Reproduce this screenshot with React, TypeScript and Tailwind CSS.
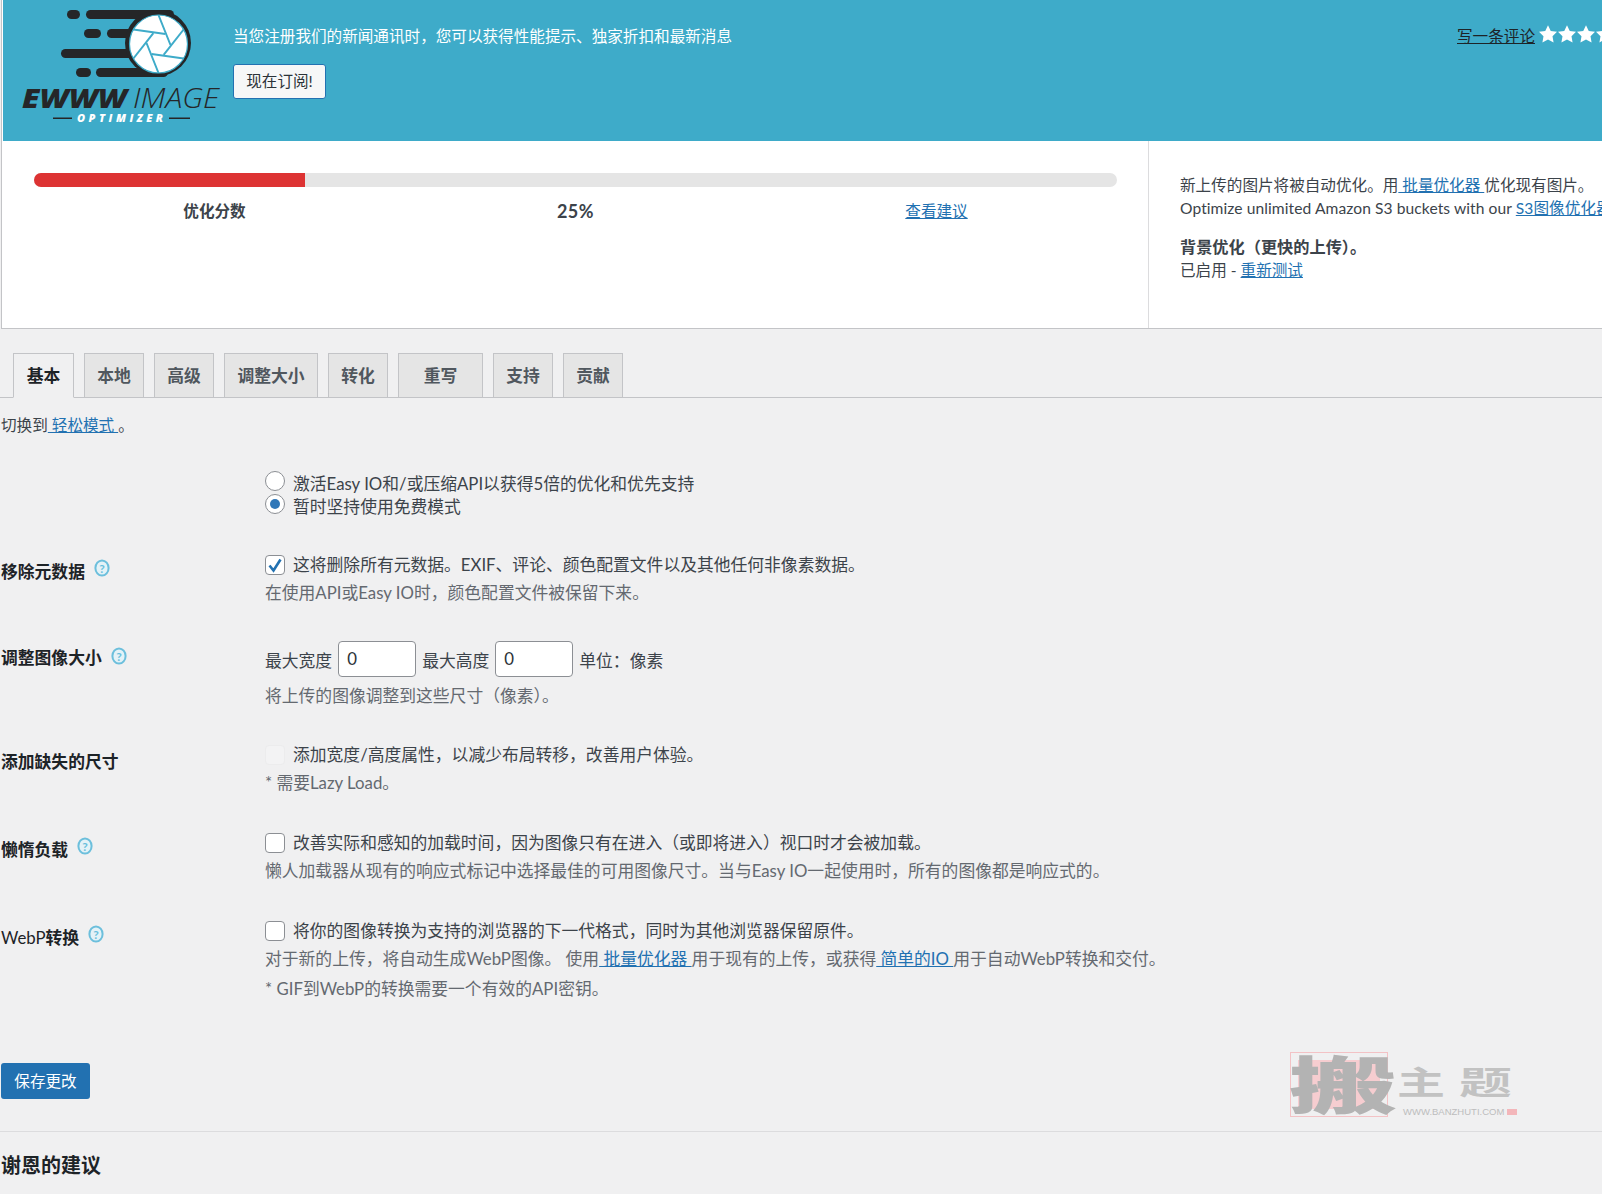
import React from "react";

const font = "[font-family:'Lato','Noto_Sans_CJK_SC',sans-serif]";

const tabs = [
  { label: "基本", width: "w-[61px]", active: true },
  { label: "本地", width: "w-[60px]" },
  { label: "高级", width: "w-[60px]" },
  { label: "调整大小", width: "w-[94px]" },
  { label: "转化", width: "w-[60px]" },
  { label: "重写", width: "w-[85px]" },
  { label: "支持", width: "w-[60px]" },
  { label: "贡献", width: "w-[60px]" },
];

const Help = ({ lift }: { lift: string }) => (
  <svg width="16" height="18" viewBox="0 0 16 18" className={`ml-[9px] shrink-0 ${lift}`}>
    <ellipse cx="8" cy="9" rx="6.6" ry="7.6" fill="#e4f2f7" stroke="#6cbfdc" strokeWidth="2" />
    <text x="8" y="13.500" textAnchor="middle" fontSize="12" fontWeight="700" fill="#6cbfdc" fontFamily="'Lato',sans-serif">
      ?
    </text>
  </svg>
);

const Checkbox = ({ checked, disabled }: { checked?: boolean; disabled?: boolean }) => (
  <span
    className={`w-[20px] h-[20px] rounded-[4px] border flex items-center justify-center shrink-0 ${
      disabled ? "bg-[#f3f3f4] border-[#ececed]" : "bg-white border-[#8c8f94]"
    }`}
  >
    {checked && (
      <svg width="16" height="16" viewBox="0 0 16 16">
        <path d="M2.5 8.5 L6.5 13.5 L13.5 2.5" fill="none" stroke="#2271b1" strokeWidth="2.6" />
      </svg>
    )}
  </span>
);

const Radio = ({ checked }: { checked?: boolean }) => (
  <span className="w-[20px] h-[20px] -translate-y-[3px] rounded-full border border-[#8c8f94] bg-white flex items-center justify-center shrink-0">
    {checked && <span className="w-[10px] h-[10px] rounded-full bg-[#2f77b8]" />}
  </span>
);

const Row = ({
  label,
  help,
  className,
  children,
}: {
  label?: React.ReactNode;
  help?: string;
  className: string;
  children: React.ReactNode;
}) => (
  <div className={`grid grid-cols-[265px_1fr] ${className}`}>
    <div className="flex items-center h-[29px] pt-[5px] pl-[1px] font-bold text-[#1d2327] leading-[24px]">
      {label}
      {help && <Help lift={help} />}
    </div>
    <div>{children}</div>
  </div>
);

const Desc = ({ children }: { children: React.ReactNode }) => (
  <p className="mt-[6px] leading-[24px] text-[#646970]">{children}</p>
);

const Link = ({ children }: { children: React.ReactNode }) => (
  <a className="text-[#2271b1] underline">{children}</a>
);

const NumberBox = () => (
  <span className="w-[78px] h-[36px] mx-[6px] pl-[8px] rounded-[4px] border border-[#8c8f94] bg-white flex items-center text-[#2c3338]">
    0
  </span>
);

const Logo = () => {
  const blades = [0, 60, 120, 180, 240, 300];
  return (
    <svg width="204" height="128" viewBox="0 0 204 128" className="shrink-0 mt-[8px] ml-[19px]">
      <g fill="#252628">
        <rect x="45" y="2" width="13" height="9" rx="4.5" />
        <rect x="64" y="2" width="88" height="9" rx="4.5" />
        <rect x="62" y="21" width="17" height="9" rx="4.5" />
        <rect x="85" y="21" width="40" height="9" rx="4.5" />
        <rect x="39" y="41" width="90" height="9" rx="4.5" />
        <rect x="54" y="60" width="15" height="9" rx="4.5" />
        <rect x="74" y="60" width="72" height="9" rx="4.5" />
        <circle cx="136" cy="35" r="33" />
      </g>
      <circle cx="136.500" cy="36" r="29" fill="#ffffff" stroke="#3eabc9" strokeWidth="1.200" />
      <g stroke="#3eabc9" strokeWidth="2">
        {blades.map((a) => (
          <line key={a} x1="136.500" y1="7" x2="148.500" y2="37" transform={`rotate(${a} 136.500 36)`} />
        ))}
      </g>
      <text x="0" y="100" fontFamily="'Open Sans',sans-serif" fontSize="27" fontWeight="800" fontStyle="italic" fill="#252628" textLength="105" lengthAdjust="spacingAndGlyphs">
        EWWW
      </text>
      <text x="111" y="100" fontFamily="'Open Sans',sans-serif" fontSize="27" fontWeight="300" fontStyle="italic" fill="#252628" textLength="86" lengthAdjust="spacingAndGlyphs">
        IMAGE
      </text>
      <rect x="31" y="109.500" width="19" height="1.500" fill="#252628" />
      <text x="55" y="114" fontFamily="'Open Sans',sans-serif" fontSize="11" fontWeight="800" fontStyle="italic" fill="#ffffff" textLength="86" lengthAdjust="spacing">
        OPTIMIZER
      </text>
      <rect x="147" y="109.500" width="21" height="1.500" fill="#252628" />
    </svg>
  );
};

const Star = () => (
  <svg width="20" height="20" viewBox="0 0 24 24" className="shrink-0 mr-[-1px] -translate-y-[2px]">
    <path fill="#ffffff" d="M12 1.500 L15.300 8.300 L22.800 9.400 L17.400 14.700 L18.700 22.200 L12 18.600 L5.300 22.200 L6.600 14.700 L1.200 9.400 L8.700 8.300 Z" />
  </svg>
);

export default function App() {
  return (
    <div className={`relative w-[1602px] h-[1194px] overflow-hidden bg-[#f0f0f1] text-[16.8px] text-[#3c434a] ${font}`}>
      <div className="ml-[1px] bg-white border-l border-b border-[#c3c4c7]">
        {/* banner */}
        <div className="ml-[1px] h-[141px] bg-[#3eabc9] flex">
          <Logo />
          <div className="ml-[7px] flex-1">
            <div className="mt-[24px] flex justify-between text-[15.6px] leading-[24px]">
              <span className="text-white">当您注册我们的新闻通讯时，您可以获得性能提示、独家折扣和最新消息</span>
              <span className="flex items-center w-[146px] shrink-0 mr-[-1px] overflow-hidden">
                <a className="underline text-[#1d2327] mr-[3px] shrink-0">写一条评论</a>
                <Star />
                <Star />
                <Star />
                <Star />
              </span>
            </div>
            <button className="mt-[16px] w-[93px] h-[35px] rounded-[3px] bg-[#f6f7f7] border border-[#2271b1] text-[15.6px] text-[#2c3338]">
              现在订阅!
            </button>
          </div>
        </div>

        {/* score + status */}
        <div className="flex h-[187px]">
          <div className="w-[1147px] shrink-0 border-r border-[#dcdcde] pt-[32px] pl-[32px] pr-[31px]">
            <div className="h-[14px] rounded-full bg-[#e5e5e5] overflow-hidden">
              <div className="w-[271px] h-full bg-[#dd3333]" />
            </div>
            <div className="grid grid-cols-3 items-center mt-[12px] text-center font-bold text-[15.6px] leading-[24px]">
              <span>优化分数</span>
              <span className="text-[18px] tracking-[0.5px]">25%</span>
              <a className="font-normal text-[#2271b1] underline">查看建议</a>
            </div>
          </div>
          <div className="pl-[31px] pt-[33px] text-[15.6px] leading-[23px] whitespace-nowrap">
            <p>
              新上传的图片将被自动优化。用<Link> 批量优化器 </Link>优化现有图片。
            </p>
            <p className="tracking-[0.08px]">
              Optimize unlimited Amazon S3 buckets with our <Link>S3图像优化器</Link>
            </p>
            <p className="mt-[15px] font-bold text-[16.2px]">背景优化（更快的上传）。</p>
            <p className="mt-[1px]">
              已启用 - <Link>重新测试</Link>
            </p>
          </div>
        </div>
      </div>

      {/* tabs */}
      <div className="mt-[24px] h-[45px] border-b border-[#c3c4c7] pl-[13px] flex gap-[10px]">
        {tabs.map((t) => (
          <div
            key={t.label}
            className={`${t.width} h-[45px] border border-[#c3c4c7] flex items-center justify-center font-bold ${
              t.active ? "bg-[#f0f0f1] border-b-[#f0f0f1] text-[#1d2327]" : "bg-[#e5e5e5] text-[#50575e]"
            }`}
          >
            {t.label}
          </div>
        ))}
      </div>

      <p className="mt-[15px] pl-[1px] text-[15.6px] leading-[24px]">
        切换到<Link> 轻松模式 </Link>。
      </p>

      {/* options */}
      <Row className="mt-[35px]">
        <label className="flex items-center gap-[8px] h-[23px]">
          <Radio />
          激活Easy IO和/或压缩API以获得5倍的优化和优先支持
        </label>
        <label className="flex items-center gap-[8px] h-[23px]">
          <Radio checked />
          暂时坚持使用免费模式
        </label>
      </Row>

      <Row className="mt-[37px]" label="移除元数据" help="-translate-y-[4px]">
        <label className="flex items-center gap-[8px] h-[20px]">
          <Checkbox checked />
          这将删除所有元数据。EXIF、评论、颜色配置文件以及其他任何非像素数据。
        </label>
        <Desc>在使用API或Easy IO时，颜色配置文件被保留下来。</Desc>
      </Row>

      <Row className="mt-[36px]" label="调整图像大小" help="-translate-y-[2px]">
        <div className="flex items-center h-[36px]">
          <span className="mt-[4px]">最大宽度</span>
          <NumberBox />
          <span className="mt-[4px]">最大高度</span>
          <NumberBox />
          <span className="mt-[4px]">单位：像素</span>
        </div>
        <p className="mt-[7px] leading-[24px] text-[#646970]">将上传的图像调整到这些尺寸（像素）。</p>
      </Row>

      <Row className="mt-[37px]" label="添加缺失的尺寸">
        <label className="flex items-center gap-[8px] h-[20px]">
          <Checkbox disabled />
          添加宽度/高度属性，以减少布局转移，改善用户体验。
        </label>
        <Desc>* 需要Lazy Load。</Desc>
      </Row>

      <Row className="mt-[38px]" label="懒惰负载" help="-translate-y-[4px]">
        <label className="flex items-center gap-[8px] h-[20px]">
          <Checkbox />
          改善实际和感知的加载时间，因为图像只有在进入（或即将进入）视口时才会被加载。
        </label>
        <Desc>懒人加载器从现有的响应式标记中选择最佳的可用图像尺寸。当与Easy IO一起使用时，所有的图像都是响应式的。</Desc>
      </Row>

      <Row
        className="mt-[38px]"
        label={
          <>
            <span className="font-normal">WebP</span>转换
          </>
        }
        help="-translate-y-[4px]"
      >
        <label className="flex items-center gap-[8px] h-[20px]">
          <Checkbox />
          将你的图像转换为支持的浏览器的下一代格式，同时为其他浏览器保留原件。
        </label>
        <Desc>
          对于新的上传，将自动生成WebP图像。 使用<Link> 批量优化器 </Link>用于现有的上传，或获得<Link> 简单的IO </Link>
          用于自动WebP转换和交付。
        </Desc>
        <Desc>* GIF到WebP的转换需要一个有效的API密钥。</Desc>
      </Row>

      <button className="block mt-[62px] ml-[1px] w-[89px] h-[36px] pt-[1px] rounded-[3px] bg-[#2271b1] text-white text-[15.6px]">
        保存更改
      </button>

      <div className="mt-[32px] border-t border-[#dcdcde]" />
      <h2 className="mt-[18px] pl-[1px] text-[20px] leading-[30px] font-bold text-[#1d2327]">谢恩的建议</h2>

      {/* watermark */}
      <div className="absolute left-[1290px] top-[1052px] w-[98px] h-[65px] border border-[#f3c2c5] p-[7px]">
        <div className="h-full bg-[#f6cdd0] flex items-center justify-center">
          <span className="text-[62px] leading-none font-black text-[#b3b3b3] translate-x-[4px] scale-x-[1.75]">搬</span>
        </div>
      </div>
      <span className="absolute left-[1397px] top-[1065px] h-[34px] text-[32px] leading-[34px] font-bold text-[#c2c2c2] origin-left scale-x-[1.5]">
        主
      </span>
      <span className="absolute left-[1459px] top-[1065px] h-[34px] text-[32px] leading-[34px] font-bold text-[#c2c2c2] origin-left scale-x-[1.65]">
        题
      </span>
      <div className="absolute left-[1403px] top-[1106px] flex items-center gap-[3px] text-[9.5px] leading-[12px] text-[#bdbdbd] [font-family:'Liberation_Sans',sans-serif]">
        WWW.BANZHUTI.COM
        <span className="w-[10px] h-[6px] bg-[#f3b6ba]" />
      </div>
    </div>
  );
}
